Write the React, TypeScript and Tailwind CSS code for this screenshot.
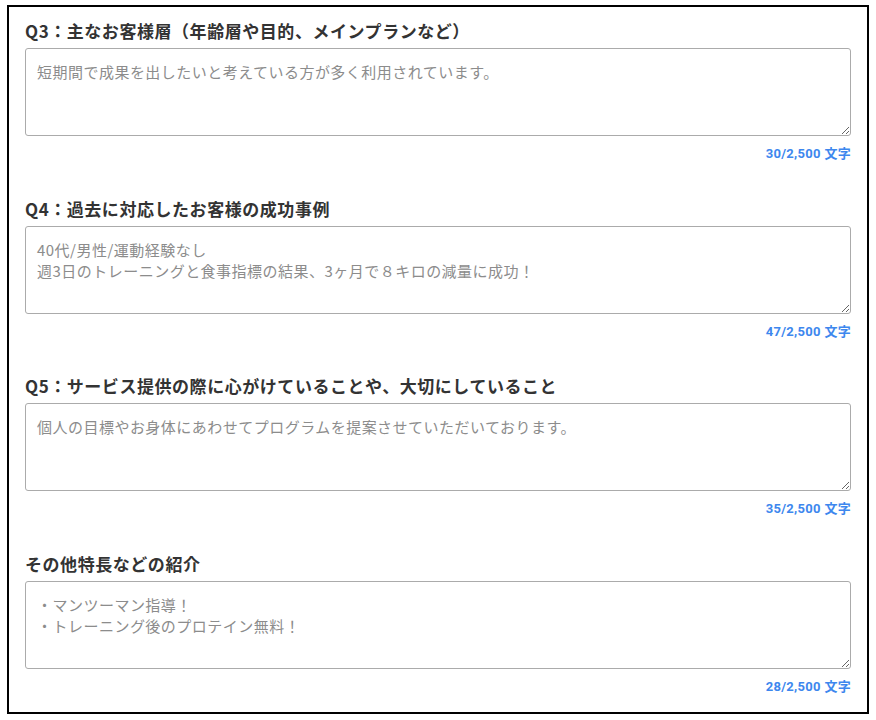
import React from "react";

const sections = [
  {
    title: "Q3：主なお客様層（年齢層や目的、メインプランなど）",
    text: "短期間で成果を出したいと考えている方が多く利用されています。",
    count: "30/2,500 文字",
  },
  {
    title: "Q4：過去に対応したお客様の成功事例",
    text: "40代/男性/運動経験なし\n週3日のトレーニングと食事指標の結果、3ヶ月で８キロの減量に成功！",
    count: "47/2,500 文字",
  },
  {
    title: "Q5：サービス提供の際に心がけていることや、大切にしていること",
    text: "個人の目標やお身体にあわせてプログラムを提案させていただいております。",
    count: "35/2,500 文字",
  },
  {
    title: "その他特長などの紹介",
    text: "・マンツーマン指導！\n・トレーニング後のプロテイン無料！",
    count: "28/2,500 文字",
  },
];

export default function App() {
  return (
    <div
      className="w-[876px] h-[720px] bg-white pt-[5px] pl-[7px]"
      style={{ fontFamily: '"Noto Sans CJK JP", "Noto Sans", sans-serif' }}
    >
      <div className="w-[862px] h-[709px] border-2 border-black px-[16px] pt-[12px] flex flex-col gap-[33.6px]">
        {sections.map((s) => (
          <div key={s.title} className="flex flex-col">
            <div className="h-[24px] leading-[24px] text-[17px] font-bold text-[#333] tracking-[0.55px]">
              {s.title}
            </div>
            <textarea
              readOnly
              placeholder={s.text}
              className="mt-[5px] h-[88px] w-full border border-[#ababab] rounded-[3px] px-[11px] pt-[12px] text-[15px] leading-[21px] tracking-[0.48px] text-[#333] placeholder:text-[#8c8c8c] outline-none resize-y"
            />
            <div
              className="mt-[9px] h-[18px] leading-[18px] text-right text-[13px] font-bold tracking-[0.3px] text-[#3d87ee]"
              style={{ fontFamily: 'Roboto, "Noto Sans CJK JP", sans-serif' }}
            >
              {s.count}
            </div>
          </div>
        ))}
      </div>
    </div>
  );
}
